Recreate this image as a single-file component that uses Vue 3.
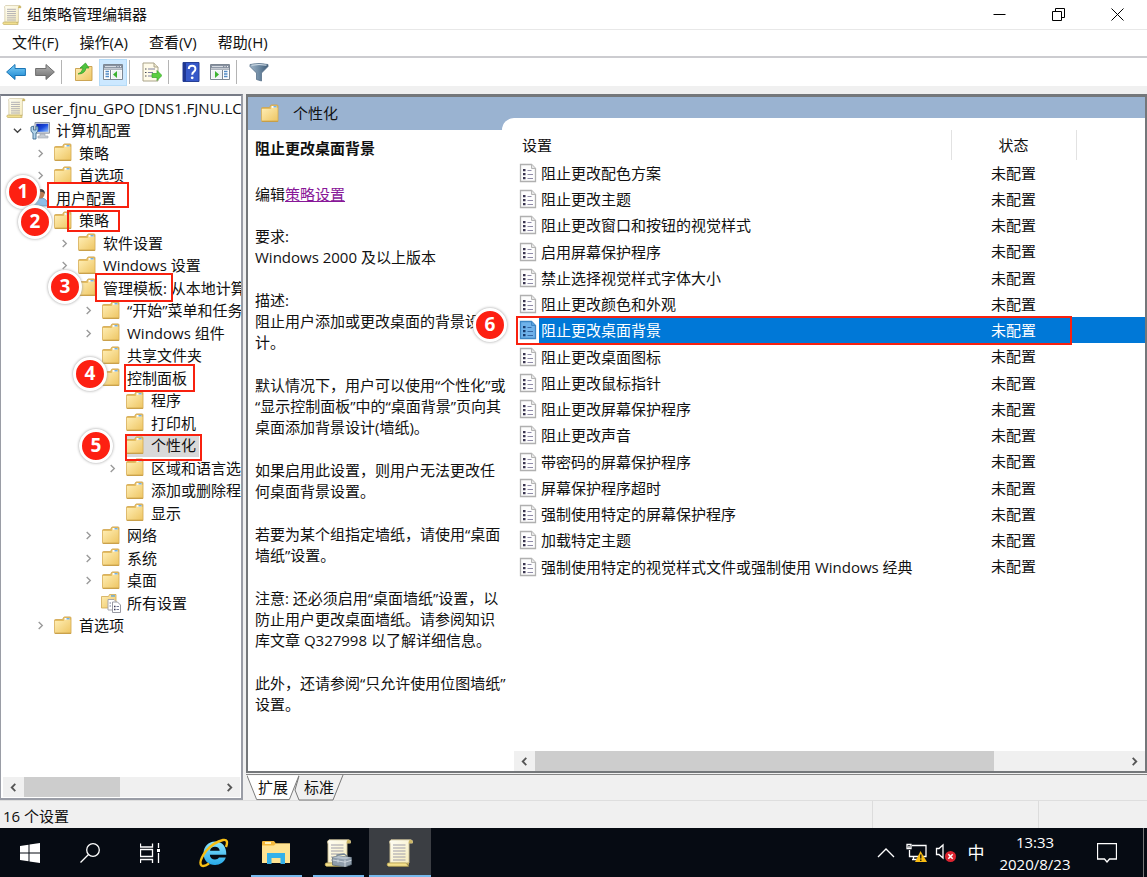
<script setup>
import { ref } from 'vue'

const menus = ['文件(F)', '操作(A)', '查看(V)', '帮助(H)']

const tools = [
  { icon: 'back', label: '后退' },
  { icon: 'forward', label: '前进' },
  null,
  { icon: 'up', label: '上移' },
  { icon: 'pane-left', label: '显示/隐藏控制台树', on: true },
  null,
  { icon: 'export', label: '导出列表' },
  null,
  { icon: 'help', label: '帮助' },
  { icon: 'pane-right', label: '显示/隐藏操作窗格' },
  null,
  { icon: 'funnel', label: '筛选器' }
]

const tree = [
  { level: 0, icon: 'scroll', text: 'user_fjnu_GPO [DNS1.FJNU.LC' },
  { level: 1, icon: 'computer', text: '计算机配置', arrow: 'down' },
  { level: 2, icon: 'folder', text: '策略', arrow: 'right' },
  { level: 2, icon: 'folder', text: '首选项', arrow: 'right' },
  { level: 1, icon: 'user', text: '用户配置', arrow: 'down' },
  { level: 2, icon: 'folder', text: '策略', arrow: 'down' },
  { level: 3, icon: 'folder', text: '软件设置', arrow: 'right' },
  { level: 3, icon: 'folder', text: 'Windows 设置', arrow: 'right' },
  { level: 3, icon: 'folder', text: '管理模板: 从本地计算', arrow: 'down' },
  { level: 4, icon: 'folder', text: '“开始”菜单和任务', arrow: 'right' },
  { level: 4, icon: 'folder', text: 'Windows 组件', arrow: 'right' },
  { level: 4, icon: 'folder', text: '共享文件夹' },
  { level: 4, icon: 'folder', text: '控制面板', arrow: 'down' },
  { level: 5, icon: 'folder', text: '程序' },
  { level: 5, icon: 'folder', text: '打印机' },
  { level: 5, icon: 'folder', text: '个性化', selected: true },
  { level: 5, icon: 'folder', text: '区域和语言选', arrow: 'right' },
  { level: 5, icon: 'folder', text: '添加或删除程' },
  { level: 5, icon: 'folder', text: '显示' },
  { level: 4, icon: 'folder', text: '网络', arrow: 'right' },
  { level: 4, icon: 'folder', text: '系统', arrow: 'right' },
  { level: 4, icon: 'folder', text: '桌面', arrow: 'right' },
  { level: 4, icon: 'all', text: '所有设置' },
  { level: 2, icon: 'folder', text: '首选项', arrow: 'right' }
]

const paragraphs = [
  '要求:\nWindows 2000 及以上版本',
  '描述:\n阻止用户添加或更改桌面的背景设\n计。',
  '默认情况下，用户可以使用“个性化”或\n“显示控制面板”中的“桌面背景”页向其\n桌面添加背景设计(墙纸)。',
  '如果启用此设置，则用户无法更改任\n何桌面背景设置。',
  '若要为某个组指定墙纸，请使用“桌面\n墙纸”设置。',
  '注意: 还必须启用“桌面墙纸”设置，以\n防止用户更改桌面墙纸。请参阅知识\n库文章 Q327998 以了解详细信息。',
  '此外，还请参阅“只允许使用位图墙纸”\n设置。'
]

const settings = [
  '阻止更改配色方案',
  '阻止更改主题',
  '阻止更改窗口和按钮的视觉样式',
  '启用屏幕保护程序',
  '禁止选择视觉样式字体大小',
  '阻止更改颜色和外观',
  '阻止更改桌面背景',
  '阻止更改桌面图标',
  '阻止更改鼠标指针',
  '阻止更改屏幕保护程序',
  '阻止更改声音',
  '带密码的屏幕保护程序',
  '屏幕保护程序超时',
  '强制使用特定的屏幕保护程序',
  '加载特定主题',
  '强制使用特定的视觉样式文件或强制使用 Windows 经典'
]
const current = ref(6)
</script>

<template>
  <div class="desktop">
    <svg class="defs" aria-hidden="true">
      <defs>
        <linearGradient id="gFolder" x1="0" y1="0" x2="1" y2="1">
          <stop offset="0" stop-color="#ffeeb5" /><stop offset="1" stop-color="#eec664" />
        </linearGradient>
        <linearGradient id="gBlue" x1="0" y1="0" x2="0" y2="1">
          <stop offset="0" stop-color="#7fd0f8" /><stop offset="1" stop-color="#1583cf" />
        </linearGradient>
        <linearGradient id="gGrey" x1="0" y1="0" x2="0" y2="1">
          <stop offset="0" stop-color="#b5b5b5" /><stop offset="1" stop-color="#6d6d6d" />
        </linearGradient>
        <linearGradient id="gScroll" x1="0" y1="0" x2="1" y2="1">
          <stop offset="0" stop-color="#fffef5" /><stop offset="1" stop-color="#f5eab8" />
        </linearGradient>
        <linearGradient id="gScreen" x1="0" y1="0" x2="1" y2="1">
          <stop offset="0" stop-color="#0a1ea8" /><stop offset=".5" stop-color="#1a49dc" /><stop offset="1" stop-color="#8fc0ff" />
        </linearGradient>
        <linearGradient id="gIe" x1="0" y1="0" x2="0" y2="1">
          <stop offset="0" stop-color="#8be4fd" /><stop offset="1" stop-color="#27a9e8" />
        </linearGradient>
        <linearGradient id="gFunnel" x1="0" y1="0" x2="1" y2="0">
          <stop offset="0" stop-color="#9fb4c6" /><stop offset=".5" stop-color="#6f8ba4" /><stop offset="1" stop-color="#3f5b76" />
        </linearGradient>
        <symbol id="folder" viewBox="0 0 20 20">
          <path d="M1.500 4.500q0-1 1-1h7l1-2q.3-.6 1-.6h5.500q1 0 1 1v15.600h-15.500q-1 0-1-1z" fill="#e5bd60" stroke="#cfa44c" stroke-width=".8" />
          <path d="M11.500 2h5v2h-5z" fill="#fff" /><path d="M13.500 2.200h3v1.300h-3z" fill="#4f9fe0" />
          <path d="M1.800 5h8.700l1.200-1.300h5.800V17H1.800z" fill="url(#gFolder)" />
          <path d="M1.800 17.200h16" stroke="#c49a42" stroke-width="1" />
        </symbol>
        <symbol id="scroll" viewBox="0 0 28 28">
          <path d="M5 .8h19.500q2.500 0 2 3.200H23v20H4V5Q2.500 2 5 .8z" fill="url(#gScroll)" stroke="#c9bd94" stroke-width=".9" />
          <path d="M22.500 4.300h4q.6-3.500-2-3.500-2 0-2 3.500z" fill="#cdb766" />
          <path d="M1.800 24h17.700q2 1 3 3.300H2.500Q0 26.500 1.800 24z" fill="#f3e08d" stroke="#b9a351" stroke-width=".8" />
          <path d="M19.500 24q3 .5 3.500 2.500v-3z" fill="#cdb766" />
          <path d="M7 6h12.500M7 9h12.500M7 12h12.500M7 15h12.500M7 18h12.500M7 21h12.500" stroke="#a09ea9" stroke-width="1.100" />
        </symbol>
        <symbol id="computer" viewBox="0 0 20 20">
          <path d="M5 1.500h14.500v10.700H5z" fill="#d5dbe2" stroke="#9099a5" />
          <path d="M6.300 2.800h12v8h-12z" fill="url(#gScreen)" />
          <path d="M10 13h5v2h3v2H8v-2h2z" fill="#c6ccd3" stroke="#9aa2ab" stroke-width=".6" />
          <path d="M1 6v4q1 2 2 2v6h3v-6q2-1 2-3V6L6 5v4H3.500V5z" fill="#b3d3e8" stroke="#3f6c92" stroke-width=".9" />
        </symbol>
        <symbol id="user" viewBox="0 0 20 20">
          <path d="M2 18q0-7 6-8h4q6 1 6 8z" fill="#8ebde7" stroke="#5586b5" stroke-width=".7" />
          <circle cx="10" cy="6" r="4.500" fill="#bd7c52" /><path d="M5 6q0-5 5-5t5 5q-2-3-6-2-2 0-4 2z" fill="#3e3430" />
        </symbol>
        <symbol id="sheet" viewBox="0 0 18 20">
          <path d="M1.500 1.500h11l4 4v13h-15z" fill="#fdfdfd" stroke="#b0b0b0" stroke-width="1.300" />
          <path d="M12.500 1.500v4h4" fill="#e7e7e7" stroke="#b5b5b5" />
          <path d="M4 6h2.500v2.300H4zM4 10h2.500v2.300H4zM4 14h2.500v2.300H4z" fill="#3a3550" />
          <path d="M8.500 7.500h4M8.500 11.500h5.500M8.500 15.500h5.500" stroke="#8f8ba8" stroke-width="1.100" />
        </symbol>
        <symbol id="sheet-on" viewBox="0 0 18 20">
          <path d="M1.500 1.500h11l4 4v13h-15z" fill="#6fb2ea" stroke="#3d86c4" stroke-width="1.300" />
          <path d="M12.500 1.500v4h4" fill="#5aa2df" stroke="#3d86c4" />
          <path d="M4 6h2.500v2.300H4zM4 10h2.500v2.300H4zM4 14h2.500v2.300H4z" fill="#173a6c" />
          <path d="M8.500 7.500h4M8.500 11.500h5.500M8.500 15.500h5.500" stroke="#3667a5" stroke-width="1.100" />
        </symbol>
        <symbol id="all" viewBox="0 0 20 20">
          <path d="M.5 3.500h7l1-2h6.500V15H.5z" fill="url(#gFolder)" stroke="#d0a850" stroke-width=".8" />
          <path d="M10 2.300h4v1.300h-4z" fill="#4f9fe0" />
          <path d="M7 6.500h6l2 2V17H7z" fill="#fff" stroke="#a5a5ad" />
          <path d="M11.500 9h5l3 3v7.500h-8z" fill="#fff" stroke="#9999a2" />
          <path d="M13 13.500h1.500M13 16.500h1.500" stroke="#3d3a55" stroke-width="1.300" /><path d="M15.500 13.500h2.500M15.500 16.500h2.500M8.500 10h1.500M8.500 13h1.500" stroke="#777b96" />
        </symbol>
        <symbol id="back" viewBox="0 0 20 20">
          <path d="M.6 10L9 2.500V6.500h10.400v7H9v4z" fill="url(#gBlue)" stroke="#1b75b5" stroke-linejoin="round" />
        </symbol>
        <symbol id="forward" viewBox="0 0 20 20">
          <path d="M19.400 10L11 2.500V6.500H.6v7H11v4z" fill="url(#gGrey)" stroke="#6f6f6f" stroke-linejoin="round" />
        </symbol>
        <symbol id="up" viewBox="0 0 20 20">
          <path d="M1.500 6.500h6l1-2h9.500v14h-16.500z" fill="url(#gFolder)" stroke="#c69d48" stroke-width=".9" />
          <path d="M4 12q4-1 5-6H6l5.500-5L15 6h-3q-1 6-8 6z" fill="#4fc43d" stroke="#2d9a28" stroke-width=".7" />
        </symbol>
        <symbol id="pane-left" viewBox="0 0 20 20">
          <path d="M.5 2.500h19v15H.5z" fill="#fff" stroke="#7d8793" /><path d="M1 3h18v3.500H1z" fill="#8791a0" />
          <path d="M2 4.600h11" stroke="#dfe4eb" /><path d="M14.500 4.600h1M17 4.600h1" stroke="#fff" />
          <path d="M1 7.500h18" stroke="#aeb5be" /><path d="M2.500 9.500H6M2.500 12H6M2.500 14.500H6" stroke="#528ac5" stroke-width="1.300" />
          <path d="M7.500 8v9" stroke="#7d8793" /><path d="M9 8.500h9.500v8H9z" fill="#eef1f4" /><path d="M14 9v7l-4-3.500z" fill="#3bb22f" />
        </symbol>
        <symbol id="pane-right" viewBox="0 0 20 20">
          <path d="M.5 2.500h19v15H.5z" fill="#fff" stroke="#7d8793" /><path d="M1 3h18v3.500H1z" fill="#8791a0" />
          <path d="M2 4.600h11" stroke="#dfe4eb" /><path d="M14.500 4.600h1M17 4.600h1" stroke="#fff" />
          <path d="M1 7.500h18" stroke="#aeb5be" /><path d="M14 9.500h3.500M14 12h3.500M14 14.500h3.500" stroke="#528ac5" stroke-width="1.300" />
          <path d="M12.500 8v9" stroke="#7d8793" /><path d="M1.500 8.500H12v8H1.500z" fill="#eef1f4" /><path d="M5 9v7l4-3.500z" fill="#3bb22f" />
        </symbol>
        <symbol id="export" viewBox="0 0 20 20">
          <path d="M1 1h11l4 4v14H1z" fill="#fffbe9" stroke="#aaa389" /><path d="M12 1v4h4" fill="#eee8cf" stroke="#aaa389" />
          <path d="M3 7h1.500M3 10.500h1.500M3 14h1.500" stroke="#4a4a55" stroke-width="1.200" /><path d="M6 7h7M6 10.500h5M6 14h4" stroke="#7e80a0" />
          <path d="M10 11.500h5V8.500l5 5-5 5v-3h-5z" fill="#5bcf3f" stroke="#36a52b" stroke-width=".7" />
        </symbol>
        <symbol id="help" viewBox="0 0 20 20">
          <path d="M2 .5h16v19H2z" fill="#3658c9" stroke="#263f96" /><path d="M2 1h3v18H2z" fill="#1f3692" />
          <path d="M7.800 7q0-3.300 3.300-3.300T14.400 7q0 1.700-1.700 2.800-1.500 1-1.500 3" fill="none" stroke="#fff" stroke-width="2" /><circle cx="11.200" cy="15.800" r="1.400" fill="#fff" />
        </symbol>
        <symbol id="funnel" viewBox="0 0 20 20">
          <path d="M1 2.500q9-2 18 0v2L12.500 11v8l-5-1.500V11L1 4.500z" fill="url(#gFunnel)" stroke="#58718a" stroke-width=".8" />
          <path d="M2.500 3.200q7.500-1.300 15 0" stroke="#dae5ee" fill="none" />
        </symbol>
      </defs>
    </svg>

    <header class="titlebar">
      <svg class="i20"><use href="#scroll" /></svg>
      <h1>组策略管理编辑器</h1>
      <div class="winctl">
        <button aria-label="最小化"><svg viewBox="0 0 13 13"><path d="M.5 6.500h12" /></svg></button>
        <button aria-label="向下还原"><svg viewBox="0 0 13 13"><path d="M.5 3.500h9v9h-9zM3.500 3.500v-3h9v9h-3" /></svg></button>
        <button aria-label="关闭"><svg viewBox="0 0 13 13"><path d="M.5.500l12 12M12.500.500l-12 12" /></svg></button>
      </div>
    </header>

    <nav class="menubar"><button v-for="m in menus" :key="m">{{ m }}</button></nav>

    <div class="toolbar">
      <template v-for="(t, i) in tools" :key="i">
        <button v-if="t" :class="{ on: t.on }" :aria-label="t.label"><svg class="i20"><use :href="'#' + t.icon" /></svg></button>
        <span v-else class="sep"></span>
      </template>
    </div>

    <main class="work">
      <section class="treepane">
        <ul class="tree" role="tree">
          <li v-for="(n, i) in tree" :key="i" role="treeitem" :class="['l' + n.level, { selected: n.selected }]">
            <span v-if="n.level" class="arrow">
              <svg v-if="n.arrow" viewBox="0 0 10 10" :class="n.arrow"><path d="M3 1l4 4-4 4" /></svg>
            </span>
            <span class="node"><svg class="i20"><use :href="'#' + n.icon" /></svg><span class="label">{{ n.text }}</span></span>
          </li>
        </ul>
        <div class="hscroll">
          <button aria-label="向左滚动"><svg viewBox="0 0 10 10"><path d="M7 1L3 5l4 4" /></svg></button>
          <span class="track"><span class="thumb small"></span></span>
          <button aria-label="向右滚动"><svg viewBox="0 0 10 10"><path d="M3 1l4 4-4 4" /></svg></button>
        </div>
      </section>

      <section class="right">
        <div class="result">
          <div class="band">
            <h2><svg class="i20"><use href="#folder" /></svg>个性化</h2>
            <span class="curve"></span>
          </div>
          <div class="split">
            <article class="desc">
              <h3>阻止更改桌面背景</h3>
              <p class="edit">编辑<a href="#policy">策略设置</a></p>
              <p v-for="(p, i) in paragraphs" :key="i">{{ p }}</p>
            </article>
            <div class="listpane">
              <table>
                <colgroup><col class="c1"><col class="c2"><col></colgroup>
                <thead><tr><th>设置</th><th class="state">状态</th><th></th></tr></thead>
                <tbody>
                  <tr v-for="(s, i) in settings" :key="s" :class="{ current: i === current }" @click="current = i">
                    <td><span class="cell"><svg class="sheet"><use :href="i === current ? '#sheet-on' : '#sheet'" /></svg><span class="name">{{ s }}</span></span></td>
                    <td class="state">未配置</td>
                    <td></td>
                  </tr>
                </tbody>
              </table>
              <div class="hscroll">
                <button aria-label="向左滚动"><svg viewBox="0 0 10 10"><path d="M7 1L3 5l4 4" /></svg></button>
                <span class="track"><span class="thumb large"></span></span>
                <button aria-label="向右滚动"><svg viewBox="0 0 10 10"><path d="M3 1l4 4-4 4" /></svg></button>
              </div>
            </div>
          </div>
        </div>
        <div class="tabs">
          <button class="tab first"><svg viewBox="0 0 54 26"><path d="M0 0L10 25H44L54 0" fill="#fff" stroke="#777" /></svg><span>扩展</span></button>
          <button class="tab second"><svg viewBox="0 0 50 26"><path d="M5 1L1 15L5 25H39L49 0" fill="#f0f0f0" stroke="#777" /></svg><span>标准</span></button>
        </div>
      </section>
    </main>

    <footer class="status"><span class="grow">16 个设置</span><span class="s1"></span><span class="s2"></span></footer>

    <div class="taskbar">
      <button class="sys" aria-label="开始"><svg width="20" height="20" viewBox="0 0 20 20"><path d="M0 3l8.500-1.200v7.700H0zM9.500 1.600L20 0v9.500H9.500zM0 10.500h8.500v7.700L0 17zM9.500 10.500H20V20L9.500 18.400z" fill="#fff" /></svg></button>
      <button class="sys" aria-label="搜索"><svg width="20" height="20" viewBox="0 0 20 20" class="line"><circle cx="13" cy="7" r="6.300" /><path d="M8.500 11.500L.5 19.500" /></svg></button>
      <button class="sys" aria-label="任务视图"><svg width="20" height="20" viewBox="0 0 20 20" class="line"><path d="M.5.500v3.500h12V.500M.5 6.500h12v7H.5zM.5 20v-3.500h12V20M18.500 0v5M18.500 10v10" /><path d="M17 6h3v3h-3z" fill="#fff" stroke="none" /></svg></button>
      <button class="app ie" aria-label="Internet Explorer">
        <svg width="30" height="30" viewBox="0 0 30 30">
          <path d="M16 3.500C9.500 3.500 4.500 8.500 4.500 15.500S9.500 27 16 27c5 0 9.200-2.800 10.800-7.500H20c-.8 1.300-2 2-4 2-3 0-5-1.700-5.200-4.700h16.500C27.500 8.500 23.500 3.500 16 3.500zm-5 9.200c.5-2.500 2.300-3.900 5-3.900 2.600 0 4.400 1.400 4.700 3.900z" fill="url(#gIe)" />
          <path d="M27 9Q30 1 24 2 15 4 7 13-1 24 2.500 27.500q2.500 1.500 7.500-2" fill="none" stroke="#f7bf15" stroke-width="2.400" />
        </svg>
      </button>
      <button class="app running" aria-label="文件资源管理器">
        <svg width="28" height="28" viewBox="0 0 28 28">
          <path d="M0 3q0-1 1-1h11l2 2.500h14v6H0z" fill="#f4b93c" /><path d="M0 6.500h12l2-2h14V24H0z" fill="#ffe392" /><path d="M3 3h6v2H3z" fill="#fff2bd" />
          <path d="M5 25V14h18v11h-4.500v-6h-9v6z" fill="#35b1ea" />
        </svg>
      </button>
      <button class="app running" aria-label="组策略管理">
        <svg width="28" height="28" viewBox="0 0 28 28">
          <use href="#scroll" width="28" height="28" />
          <path d="M13 18v-2l7-1 3 2v2" fill="none" stroke="#758595" stroke-width="1.300" /><path d="M8.500 18.500l6-1.500 13 1.500v7L21 28 8.500 26z" fill="#8f9dab" stroke="#5d6c79" stroke-width=".8" /><path d="M8.500 18.500l6-1.500 13 1.500-6.500 2z" fill="#b7c2cc" /><path d="M8.500 21l12.500 2.200 6.500-2M21 21v7M14 20.500v3" stroke="#dbe2e8" fill="none" stroke-width=".8" />
        </svg>
      </button>
      <button class="app active" aria-label="组策略管理编辑器"><svg width="28" height="28"><use href="#scroll" /></svg></button>
      <div class="tray">
        <button class="t" aria-label="显示隐藏的图标"><svg width="18" height="10" viewBox="0 0 18 10" class="line"><path d="M1 9l8-8 8 8" /></svg></button>
        <button class="t" aria-label="网络"><svg width="21" height="20" viewBox="0 0 21 20" class="line">
          <path d="M6 2.500h14v11H3.500V7M6 16.500h8M1 1.500h4v4H1zM3 3v3M7.500 14v3" /><path d="M14.500 8L21 19H9z" fill="#f9bd13" stroke="none" /><path d="M14.800 11.500v4M14.800 16.500v1.500" stroke="#111" />
        </svg></button>
        <button class="t" aria-label="音量"><svg width="22" height="20" viewBox="0 0 22 20" class="line">
          <path d="M1.500 5.500H4l4-3.500v13l-4-3.500H1.500z" /><circle cx="15.500" cy="13.500" r="5.500" fill="#dc2430" stroke="none" /><path d="M13.300 11.300l4.400 4.400M17.700 11.300l-4.400 4.400" stroke-width="1.500" />
        </svg></button>
        <button class="t ime" aria-label="输入法">中</button>
        <div class="clock"><time>13:33</time><time>2020/8/23</time></div>
        <button class="note" aria-label="通知"><svg width="20" height="20" viewBox="0 0 20 20" class="line"><path d="M.5.500h19v15.500h-7L10 19 7.500 16H.5z" /></svg></button>
        <span class="peek"></span>
      </div>
    </div>

    <span class="box b1"></span><span class="box b2"></span><span class="box b3"></span>
    <span class="box b4"></span><span class="box b5"></span><span class="box b6"></span>
    <span v-for="n in 6" :key="n" :class="['num', 'n' + n]">{{ n }}</span>
  </div>
</template>

<style>
body { margin: 0; }
</style>

<style scoped>
* { box-sizing: border-box; }
.desktop {
  position: relative;
  display: flex;
  flex-direction: column;
  min-height: 100vh;
  overflow: hidden;
  background: #f0f0f0;
  color: #111;
  font: 15px/21px "Open Sans", "Noto Sans CJK SC", sans-serif;
}
.defs { position: absolute; width: 0; height: 0; }
.i20 { width: 20px; height: 20px; flex: none; }
button { font: inherit; color: inherit; background: none; border: 0; padding: 0; }
h1, h2, h3, p, ul { margin: 0; padding: 0; font: inherit; }

.titlebar { display: flex; align-items: center; height: 30px; padding-left: 2px; gap: 5px; background: #fff; border-bottom: 1px solid #e8e8e8; }
.winctl { display: flex; margin-left: auto; }
.winctl button { width: 59px; height: 29px; display: grid; place-items: center; }
.winctl svg { width: 13px; height: 13px; fill: none; stroke: #000; stroke-width: 1; }

.menubar { display: flex; gap: 21px; height: 28px; padding: 0 0 2px 12px; background: #fff; border-bottom: 2px solid #ccccd0; }

.toolbar { display: flex; align-items: center; gap: 1px; height: 28px; padding-left: 2px; background: #fff; }
.toolbar button { width: 28px; height: 27px; display: grid; place-items: center; }
.toolbar button.on { background: #cce8ff; outline: 1px solid #b5dbf7; outline-offset: -1px; }
.sep { width: 1px; height: 24px; margin: 0 7px 0 1px; background: #b4b4b4; }

.work { flex: 1; display: flex; gap: 3px; padding-top: 8px; }
.treepane { width: 243px; flex: none; display: flex; flex-direction: column; border: 2px solid #9a9da6; border-left-width: 1px; border-top-color: #777b86; background: #fff; padding: 1px 1px 1px 2px; }
.tree { flex: 1; list-style: none; margin: 0 -1px 0 -2px; overflow: hidden; }
.tree li { display: flex; height: 22px; white-space: nowrap; }
.tree li:nth-child(even) { height: 23px; }
.arrow { width: 24px; flex: none; display: grid; place-items: center; margin-right: 1px; }
.arrow svg { width: 9px; height: 9px; fill: none; stroke: #999; stroke-width: 1.5; }
.arrow svg.down { transform: rotate(90deg); stroke: #444; }
.node { flex: none; display: flex; align-items: center; gap: 6px; }
.selected .node { background: #d9d9d9; padding-right: 3px; }
.l0 { padding-left: 5px; }
.l1 { padding-left: 4px; }
.l2 { padding-left: 27px; }
.l3 { padding-left: 51px; }
.l4 { padding-left: 75px; }
.l5 { padding-left: 99px; }

.hscroll { display: flex; height: 20px; background: #f0f0f0; }
.hscroll button { width: 21px; display: grid; place-items: center; }
.hscroll svg { width: 9px; height: 9px; fill: none; stroke: #555; stroke-width: 2; }
.track { flex: 1; display: flex; }
.thumb { background: #cdcdcd; }
.thumb.small { width: 49%; }
.thumb.large { width: 78%; }

.right { flex: 1; min-width: 0; display: flex; flex-direction: column; }
.result { flex: 1; display: flex; flex-direction: column; background: #fff; border: 2px solid #74777a; border-top-width: 3px; }
.band { display: flex; height: 33px; background: #9ab3d1; }
.band h2 { width: 254px; display: flex; align-items: center; gap: 13px; padding-left: 12px; }
.curve { flex: 1; height: 12px; align-self: flex-end; background: #fff; border-top-left-radius: 12px; }
.split { flex: 1; display: flex; }
.desc { width: 266px; flex: none; padding: 8px 0 0 7px; white-space: pre; }
.desc h3 { font-weight: 700; }
.desc p { margin-bottom: 22px; }
.desc .edit { margin: 25px 0 21px; }
.desc a { color: #881798; text-decoration: underline; }
.listpane { flex: 1; min-width: 0; display: flex; flex-direction: column; justify-content: space-between; }
table { width: 100%; table-layout: fixed; border-collapse: collapse; }
.c1 { width: 437px; }
.c2 { width: 125px; }
th, td { padding: 0; font-weight: 400; text-align: left; white-space: nowrap; }
thead tr { height: 30px; }
th { border-right: 1px solid #e2e2e2; }
th:first-child { padding-left: 8px; }
th:last-child { border: 0; }
th.state, td.state { text-align: center; }
tbody tr { height: 26px; }
tbody tr:nth-child(4n) { height: 27px; }
.cell { display: flex; align-items: center; height: 26px; }
.sheet { width: 18px; height: 20px; flex: none; margin: 0 2px 0 5px; }
.name { flex: 1; line-height: 26px; padding-left: 2px; }
.current .name, .current td:not(:first-child) { background: #0078d7; color: #fff; }

.tabs { display: flex; height: 26px; margin-top: 1px; border-top: 1px solid #858585; padding-left: 1px; }
.tab { position: relative; height: 25px; }
.tab svg { position: absolute; left: 0; top: 0; width: 100%; height: 26px; }
.tab span { position: relative; }
.first { width: 52px; z-index: 1; }
.second { width: 50px; margin-left: -5px; }

.status { display: flex; height: 28px; border-top: 1px solid #dedede; padding-left: 3px; }
.grow { flex: 1; line-height: 30px; }
.s1, .s2 { border-left: 1px solid #dcdcdc; }
.s1 { width: 166px; }
.s2 { width: 109px; }

.taskbar { display: flex; height: 49px; background: #060b13; color: #fff; }
.taskbar button { display: grid; place-items: center; }
.line { fill: none; stroke: #fff; stroke-width: 1.3; }
.sys { width: 60px; }
.app { position: relative; width: 62px; }
.ie { margin-left: 3px; }
.running::after, .active::after { content: ""; position: absolute; bottom: 0; left: 6px; right: 5px; height: 2px; background: #76b9ed; }
.active { background: #3b3e43; }
.active::after { left: 0; right: 0; }
.tray { display: flex; align-items: center; margin-left: auto; }
.t { width: 30px; }
.ime { font-size: 17px; }
.clock { width: 88px; display: flex; flex-direction: column; align-items: center; line-height: 22px; padding-top: 1px; }
.note { width: 56px; }
.peek { width: 4px; height: 49px; margin-left: 8px; border-left: 1px solid #777; }

.box { position: absolute; border: 2px solid #f8210f; }
.b1 { left: 47px; top: 182px; width: 82px; height: 26px; }
.b2 { left: 67px; top: 210px; width: 53px; height: 22px; }
.b3 { left: 95px; top: 273px; width: 78px; height: 29px; }
.b4 { left: 124px; top: 364px; width: 71px; height: 28px; }
.b5 { left: 125px; top: 434px; width: 77px; height: 27px; }
.b6 { left: 516px; top: 316px; width: 556px; height: 29px; }
.num { position: absolute; width: 34px; height: 34px; border: 3px solid #fff; border-radius: 50%; background: #fd2012; box-shadow: 0 0 3px #999; color: #fff; font: 700 19px/27px "Open Sans", sans-serif; text-align: center; }
.n1 { left: 6px; top: 175px; }
.n2 { left: 18px; top: 205px; }
.n3 { left: 48px; top: 270px; }
.n4 { left: 73px; top: 357px; }
.n5 { left: 79px; top: 429px; }
.n6 { left: 473px; top: 308px; }
</style>
